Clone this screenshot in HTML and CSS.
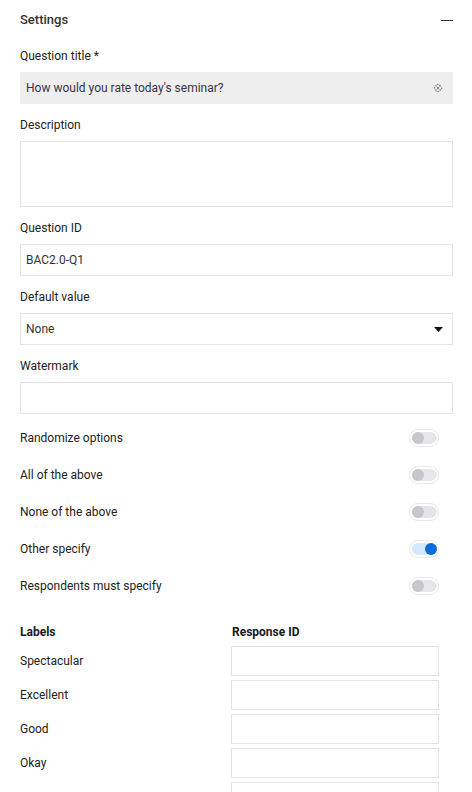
FILE: index.html
```html
<!DOCTYPE html>
<html lang="en">
<head>
<meta charset="utf-8">
<title>Settings</title>
<link rel="stylesheet" href="styles.css">
</head>
<body>
<div class="panel">
  <div class="header">
    <span class="title">Settings</span>
    <span class="minus"></span>
  </div>

  <div class="field">
    <div class="label">Question title *</div>
    <div class="input filled">
      <span>How would you rate today's seminar?</span>
      <svg class="wand" width="10" height="10" viewBox="0 0 10 10">
        <path d="M5 0.8 L9.2 5 L5 9.2 L0.8 5 Z" fill="none" stroke="#5a5a6a" stroke-width="1" stroke-dasharray="1.2 0.8"/>
        <path d="M2.5 2.5 L7.5 7.5 M7.5 2.5 L2.5 7.5" stroke="#5a5a6a" stroke-width="1" stroke-dasharray="1.2 0.8"/>
      </svg>
    </div>
  </div>

  <div class="field">
    <div class="label">Description</div>
    <div class="input area"></div>
  </div>

  <div class="field">
    <div class="label">Question ID</div>
    <div class="input"><span>BAC2.0-Q1</span></div>
  </div>

  <div class="field">
    <div class="label">Default value</div>
    <div class="input select">
      <span>None</span>
      <svg class="caret" width="9" height="5" viewBox="0 0 9 5"><path d="M0 0 H9 L4.5 5 Z" fill="#111"/></svg>
    </div>
  </div>

  <div class="field">
    <div class="label">Watermark</div>
    <div class="input"></div>
  </div>

  <div class="toggles">
    <div class="trow"><span>Randomize options</span><span class="switch"><span class="knob"></span></span></div>
    <div class="trow"><span>All of the above</span><span class="switch"><span class="knob"></span></span></div>
    <div class="trow"><span>None of the above</span><span class="switch"><span class="knob"></span></span></div>
    <div class="trow"><span>Other specify</span><span class="switch on"><span class="knob"></span></span></div>
    <div class="trow"><span>Respondents must specify</span><span class="switch"><span class="knob"></span></span></div>
  </div>

  <div class="grid">
    <div class="gh">Labels</div>
    <div class="gh rid">Response ID</div>
    <div class="gl">Spectacular</div><div class="gi"></div>
    <div class="gl">Excellent</div><div class="gi"></div>
    <div class="gl">Good</div><div class="gi"></div>
    <div class="gl">Okay</div><div class="gi"></div>
    <div class="gl"></div><div class="gi"></div>
  </div>
</div>
</body>
</html>
```

FILE: styles.css
```css
* { box-sizing: border-box; }
html, body {
  margin: 0;
  padding: 0;
  background: #ffffff;
  overflow: hidden;
}
body {
  font-family: Roboto, "Liberation Sans", Arial, sans-serif;
  font-size: 12px;
  color: #222222;
  height: 792px;
}
.panel {
  padding: 0 19px 0 20px;
}
.header {
  display: flex;
  align-items: center;
  justify-content: space-between;
  padding: 12px 0 7px;
  height: 35px;
}
.title {
  font-size: 13px;
  font-weight: 500;
  line-height: 16px;
  color: #333333;
}
.minus {
  display: block;
  width: 12px;
  height: 1.5px;
  background: #333333;
  margin-top: 1px;
}
.field {
  margin-top: 13px;
}
.label {
  line-height: 16px;
  margin-bottom: 8px;
  color: #222222;
}
.input {
  height: 32px;
  border: 1px solid #e3e3e3;
  display: flex;
  align-items: center;
  justify-content: space-between;
  padding: 0 9px 0 5px;
  color: #333333;
}
.input.filled {
  background: #eeeeee;
  border-color: #eeeeee;
  color: #3a3344;
}
.input.area { height: 66px; }
.wand { display: block; }
.caret { display: block; margin-top: 1px; }
.toggles {
  margin-top: 5px;
}
.trow {
  height: 37px;
  display: flex;
  align-items: center;
  justify-content: space-between;
  padding-right: 14px;
}
.switch {
  display: flex;
  align-items: center;
  width: 30px;
  height: 18px;
  border: 1px solid #e8e8ea;
  border-radius: 9px;
  padding: 2px 1px 2px 2px;
  background: linear-gradient(#e6e6ea, #e6e6ea) content-box, #ffffff;
}
.switch .knob {
  display: block;
  width: 12px;
  height: 12px;
  border-radius: 50%;
  background: #c6c6cb;
}
.switch.on {
  justify-content: flex-end;
  background: linear-gradient(#d3e9fd, #d3e9fd) content-box, #ffffff;
}
.switch.on .knob { background: #0a6cd8; }
.grid {
  margin-top: 20px;
  display: grid;
  grid-template-columns: 211px 208px;
  grid-template-rows: 18px;
  grid-auto-rows: 30px;
  row-gap: 4px;
}
.gh {
  font-weight: 700;
  line-height: 16px;
  color: #1a1a1a;
}
.rid { padding-left: 1px; }
.gl {
  display: flex;
  align-items: center;
}
.gi {
  border: 1px solid #e3e3e3;
}
```
